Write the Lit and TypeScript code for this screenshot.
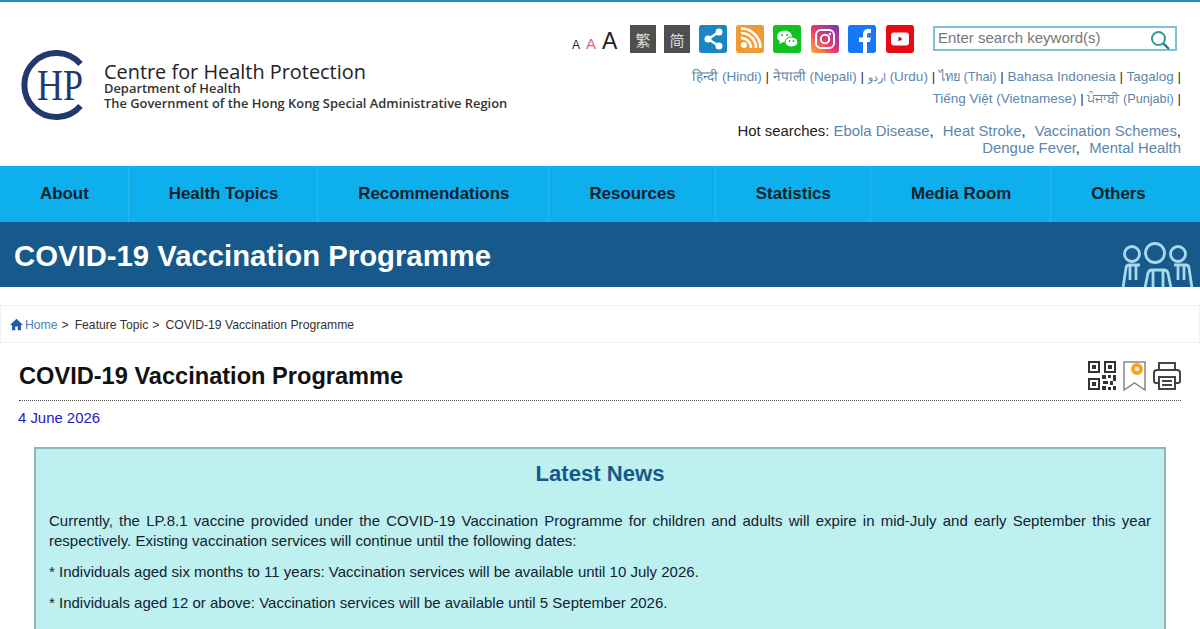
import { LitElement, html, css, svg } from "lit";
import { customElement } from "lit/decorators.js";

const nav = ["About", "Health Topics", "Recommendations", "Resources", "Statistics", "Media Room", "Others"];

@customElement("app-root")
export class AppRoot extends LitElement {
  static styles = css`
    :host { display: block; height: 629px; overflow: hidden; background: #fff; font-family: "Liberation Sans", Arial, sans-serif; color: #111; }
    a { color: #5b86ad; text-decoration: none; }
    .top { height: 164px; border-top: 2px solid #1f8db5; display: flex; justify-content: space-between; }
    .logo { display: flex; align-items: flex-start; padding: 48px 0 0 21px; }
    .logo svg { display: block; width: 76px; height: 74px; flex: none; }
    .logo-text { margin-left: 7px; padding-top: 12px; font-family: "Open Sans", "Noto Sans", sans-serif; color: #222; white-space: nowrap; }
    .logo-1 { font-size: 19.9px; line-height: 19px; font-weight: 500; }
    .logo-2 { font-size: 12.9px; line-height: 15px; font-weight: 600; color: #333; }
    .right { width: 630px; padding-right: 19px; display: flex; flex-direction: column; align-items: flex-end; }
    .tools { display: flex; align-items: flex-start; padding-top: 23px; height: 42px; width: 609px; }
    .sizes { width: 58px; flex: none; height: 28px; display: flex; align-items: baseline; gap: 6px; padding-top: 4px; box-sizing: border-box; line-height: 24px; color: #222; }
    .s1 { font-size: 12px; }
    .s2 { font-size: 15px; color: #e0607f; }
    .s3 { font-size: 23px; }
    .icons { display: flex; gap: 9px; align-items: flex-start; flex: none; }
    .ic { width: 28px; height: 28px; display: block; flex: none; border-radius: 2px; }
    .ml { margin-left: 1px; }
    .cn { width: 26px; height: 28px; background: #4f4f4f; color: #ddd; font: 15px "Noto Sans CJK TC", sans-serif; display: flex; align-items: center; justify-content: center; margin-right: -1px; }
    .cn + .cn { margin-right: 0; }
    .search { margin-left: 19px; width: 244px; flex: none; height: 25px; box-sizing: border-box; border: 2px solid #7fc1d6; display: flex; align-items: center; justify-content: space-between; padding: 0 4px 2px 3px; font-size: 15px; color: #777; margin-top: 1px; }
    .search svg { width: 24px; height: 24px; margin-top: 4px; margin-right: -1px; }
    .langs { font-size: 13.5px; line-height: 22px; text-align: right; color: #333; margin-top: -1px; white-space: nowrap; }
    .ur { font-size: 11.4px; }
    .tight { font-size: 12.7px; }
    .hot { font-size: 14.9px; line-height: 17px; text-align: right; margin-top: 13px; white-space: nowrap; color: #222; }
    .hot span { margin-left: 5px; }
    nav { height: 56px; background: #0db0ec; display: flex; align-items: stretch; }
    nav div { padding: 0 39px 0 40px; display: flex; align-items: center; font-size: 16.9px; font-weight: bold; color: #10222c; border-right: 1px solid #2bb9ec; white-space: nowrap; }
    nav div:last-child { border-right: 0; }
    .banner { height: 65px; background: #17598a; display: flex; align-items: center; justify-content: space-between; padding-left: 14px; overflow: hidden; }
    .banner h2 { margin: 0; color: #fff; font-size: 29.3px; font-weight: bold; padding-top: 3px; }
    .banner svg { width: 78px; height: 65px; display: block; }
    .crumb { margin-top: 18px; height: 38px; box-sizing: border-box; border: 1px solid #f1f1f1; display: flex; align-items: center; padding: 1px 0 0 9px; font-size: 12.2px; color: #333; gap: 4px; }
    .crumb svg { width: 13px; height: 13px; margin-right: -2px; }
    .crumb a { color: #4a7fb5; }
    .crumb .g { margin-right: 2px; }
    .head { margin: 0 19px; height: 57px; border-bottom: 1px dotted #555; display: flex; justify-content: space-between; align-items: flex-start; }
    .head h1 { margin: 0; padding-top: 18px; font-size: 23.6px; line-height: 30px; font-weight: bold; color: #111; }
    .tools2 { display: flex; gap: 7px; padding-top: 18px; }
    .tools2 svg { display: block; }
    .date { margin: 9px 18px 0; font-size: 14.9px; line-height: 17px; color: #2020c8; }
    .box { margin: 20px 34px 0; height: 260px; box-sizing: border-box; background: #bff0f0; border: 2px solid #8fb7b5; padding: 12px 13px 0; font-size: 15px; line-height: 20px; color: #123; }
    .box h3 { margin: 0 0 24px; text-align: center; font-size: 22.1px; line-height: 26px; color: #17598a; font-weight: bold; }
    .box p { margin: 0 0 11px; }
    .just { text-align: justify; }
  `;

  render() {
    return html`
      <div class="top">
        <div class="logo">
          <svg viewBox="0 0 76 74" aria-label="CHP">
            <path d="M59.500 14A32 32 0 1 0 59.500 56" fill="none" stroke="#23386f" stroke-width="6"/>
            <text x="16" y="50" font-family="Liberation Serif" font-size="44" fill="#23386f" textLength="46" lengthAdjust="spacingAndGlyphs">HP</text>
          </svg>
          <div class="logo-text">
            <div class="logo-1">Centre for Health Protection</div>
            <div class="logo-2">Department of Health</div>
            <div class="logo-2">The Government of the Hong Kong Special Administrative Region</div>
          </div>
        </div>
        <div class="right">
          <div class="tools">
            <div class="sizes"><span class="s1">A</span><span class="s2">A</span><span class="s3">A</span></div>
            <div class="icons">
              <div class="cn">繁</div>
              <div class="cn">简</div>
              <svg class="ic" viewBox="0 0 28 28"><rect width="28" height="28" rx="2" fill="#1c86c4"/><path d="M20 7 9 14l11 7" fill="none" stroke="#fff" stroke-width="2.5"/><circle cx="20" cy="7" r="3.5" fill="#fff"/><circle cx="9" cy="14" r="3.5" fill="#fff"/><circle cx="20" cy="21" r="3.5" fill="#fff"/></svg>
              <svg class="ic" viewBox="0 0 28 28"><rect width="28" height="28" rx="2" fill="#f09a33"/><circle cx="8" cy="20" r="3" fill="#fff"/><path d="M5 13a10 10 0 0 1 10 10M5 8a15 15 0 0 1 15 15M5 3.500a19.500 19.500 0 0 1 19.500 19.500" fill="none" stroke="#fff" stroke-width="2.6"/></svg>
              <svg class="ic" viewBox="0 0 28 28"><rect width="28" height="28" rx="2" fill="#12c11f"/><ellipse cx="11.500" cy="11.500" rx="7.500" ry="6" fill="#fff"/><path d="M7 16l-1 3 4-2z" fill="#fff"/><ellipse cx="18.500" cy="17" rx="6.500" ry="5" fill="#fff" stroke="#12c11f"/><circle cx="9" cy="10" r="1" fill="#12c11f"/><circle cx="14" cy="10" r="1" fill="#12c11f"/><circle cx="16.500" cy="16" r=".9" fill="#12c11f"/><circle cx="20.500" cy="16" r=".9" fill="#12c11f"/></svg>
              <svg class="ic ml" viewBox="0 0 28 28"><defs><linearGradient id="ig" x1="0" y1="1" x2="1" y2="0"><stop offset="0" stop-color="#fdb33b"/><stop offset=".45" stop-color="#ea3a66"/><stop offset="1" stop-color="#6a3bbd"/></linearGradient></defs><rect width="28" height="28" rx="2" fill="url(#ig)"/><rect x="5" y="5" width="18" height="18" rx="5" fill="none" stroke="#fff" stroke-width="2"/><circle cx="14" cy="14" r="4.200" fill="none" stroke="#fff" stroke-width="2"/><circle cx="19" cy="9" r="1.200" fill="#fff"/></svg>
              <svg class="ic" viewBox="0 0 28 28"><rect width="28" height="28" rx="2" fill="#1877f2"/><path d="M15 28V17h-4v-4.500h4V9.500C15 6 17 4 20.500 4H23v4h-2c-1.500 0-2 .8-2 2v2.500h3.800L22 17h-3v11z" fill="#fff"/></svg>
              <svg class="ic ml" viewBox="0 0 28 28"><rect width="28" height="28" rx="2" fill="#e60b12"/><rect x="5" y="7.500" width="18" height="13" rx="3" fill="#fff"/><path d="M12.500 11.500v5l4-2.500z" fill="#a01020"/></svg>
            </div>
            <div class="search">
              <span>Enter search keyword(s)</span>
              <svg viewBox="0 0 24 24"><circle cx="10.500" cy="10.500" r="6.500" fill="none" stroke="#2a9d96" stroke-width="2"/><path d="M15.500 15.500 21 21" stroke="#1f6f8f" stroke-width="2.200"/></svg>
            </div>
          </div>
          <div class="langs">
            <a>हिन्दी (Hindi)</a> | <a>नेपाली (Nepali)</a> | <a><span class="ur">اردو</span> (Urdu)</a> | <a class="tight">ไทย (Thai)</a> | <a>Bahasa Indonesia</a> | <a>Tagalog</a> |<br>
            <a>Tiếng Việt (Vietnamese)</a> | <a class="tight">ਪੰਜਾਬੀ (Punjabi)</a> |
          </div>
          <div class="hot">
            Hot searches: <a>Ebola Disease</a>,<span></span> <a>Heat Stroke</a>,<span></span> <a>Vaccination Schemes</a>,<br>
            <a>Dengue Fever</a>,<span></span> <a>Mental Health</a>
          </div>
        </div>
      </div>
      <nav>${nav.map((n) => html`<div>${n}</div>`)}</nav>
      <div class="banner">
        <h2>COVID-19 Vaccination Programme</h2>
        <svg viewBox="0 0 78 65" fill="none" stroke="#a9d9ee" stroke-width="2.800">
          ${svg`<circle cx="10" cy="32" r="7.500"/><circle cx="33" cy="31" r="9.500"/><circle cx="56" cy="32" r="7.500"/>
          <path d="M1 66 4 46q.5-3 3-3h11M8 43v15M14 43v15"/>
          <path d="M23 66l3-15q1-3 4-3h12q3 0 4 3l3 15M31 48v18M41 48v18"/>
          <path d="M52 43h12q2.500 0 3 3l3 20M56 43v15M62 43v15"/>`}
        </svg>
      </div>
      <div class="crumb">
        <svg viewBox="0 0 16 16"><path d="M8 1 0 8.500h2.500V15h4v-4.500h3V15h4V8.500H16z" fill="#1f5fa8"/></svg>
        <a>Home</a><span class="g">&gt;</span><span>Feature Topic</span><span class="g">&gt;</span><span>COVID-19 Vaccination Programme</span>
      </div>
      <div class="head">
        <h1>COVID-19 Vaccination Programme</h1>
        <div class="tools2">
          <svg width="28" height="29" viewBox="0 0 28 29" fill="#333">
            <path d="M0 0h12v12H0zM2 2v8h8V2zM4 4h4v4H4zM16 0h12v12H16zM18 2v8h8V2zM20 4h4v4h-4zM0 17h12v12H0zM2 19v8h8v-8zM4 21h4v4H4zM14 14h4v4h-4zM20 14h3v3h-3zM25 14h3v6h-3zM15 20h5v3h-5zM22 20h3v4h-3zM14 25h4v4h-4zM20 26h3v3h-3zM25 25h3v4h-3z" fill-rule="evenodd"/>
          </svg>
          <svg width="23" height="30" viewBox="0 0 23 30"><path d="M1 1h21v28l-10.500-7L1 29z" fill="#fff" stroke="#7d8a8a" stroke-width="1.500"/><circle cx="14" cy="8" r="6" fill="#f6a623"/><circle cx="14" cy="8" r="2.200" fill="#fff3d0"/></svg>
          <svg width="28" height="29" viewBox="0 0 28 29" fill="none" stroke="#444" stroke-width="2"><path d="M6 9V2h16v7M6 22H3q-2 0-2-2v-8q0-3 3-3h20q3 0 3 3v8q0 2-2 2h-3"/><path d="M6 16h16v12H6zM9 20h10M9 24h10"/></svg>
        </div>
      </div>
      <div class="date">4 June 2026</div>
      <div class="box">
        <h3>Latest News</h3>
        <p class="just">Currently, the LP.8.1 vaccine provided under the COVID-19 Vaccination Programme for children and adults will expire in mid-July and early September this year respectively. Existing vaccination services will continue until the following dates:</p>
        <p>* Individuals aged six months to 11 years: Vaccination services will be available until 10 July 2026.</p>
        <p>* Individuals aged 12 or above: Vaccination services will be available until 5 September 2026.</p>
      </div>
    `;
  }
}
